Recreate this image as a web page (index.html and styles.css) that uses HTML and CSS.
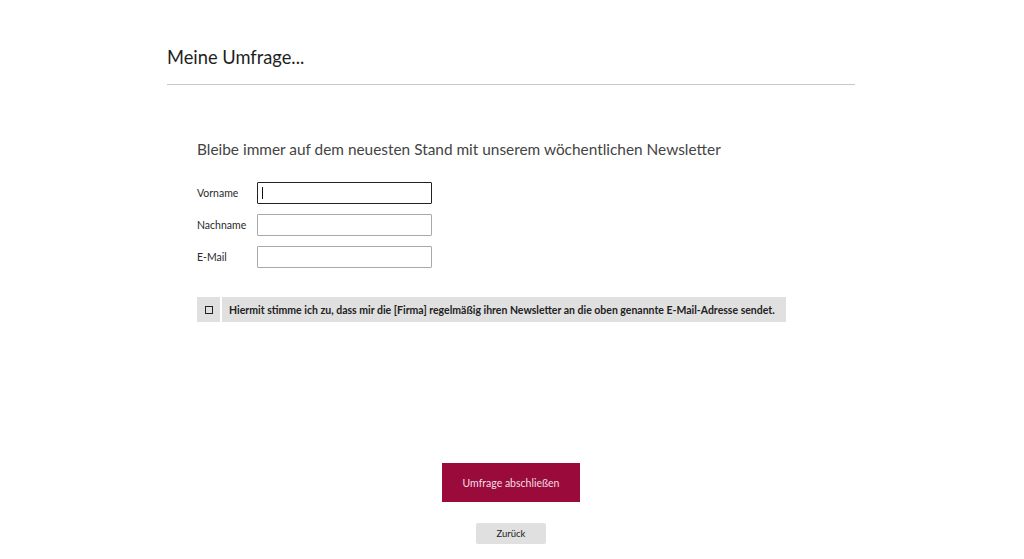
FILE: index.html
```html
<!DOCTYPE html>
<html lang="de">
<head>
<meta charset="utf-8">
<title>Meine Umfrage</title>
<link rel="stylesheet" href="styles.css">
</head>
<body>
<main class="page">
  <h1 class="title">Meine Umfrage...</h1>
  <hr class="rule">
  <section class="survey">
    <h2 class="lead">Bleibe immer auf dem neuesten Stand mit unserem wöchentlichen Newsletter</h2>
    <div class="fields">
      <label class="field"><span class="label">Vorname</span><span class="input focus"><span class="caret"></span></span></label>
      <label class="field"><span class="label">Nachname</span><span class="input"></span></label>
      <label class="field"><span class="label">E-Mail</span><span class="input"></span></label>
    </div>
    <div class="consent">
      <span class="box-cell"><span class="box"></span></span>
      <span class="consent-text">Hiermit stimme ich zu, dass mir die [Firma] regelmäßig ihren Newsletter an die oben genannte E-Mail-Adresse sendet.</span>
    </div>
  </section>
  <div class="actions">
    <button class="btn-primary">Umfrage abschließen</button>
    <button class="btn-back">Zurück</button>
  </div>
</main>
</body>
</html>
```

FILE: styles.css
```css
html, body {
  margin: 0;
  padding: 0;
  background: #ffffff;
}
body {
  font-family: Lato, "Open Sans", "Liberation Sans", sans-serif;
  color: #222;
}
.page {
  width: 688px;
  margin: 0 auto;
  padding-top: 45px;
  box-sizing: border-box;
  position: relative;
  left: -1px;
}
.title {
  margin: 0;
  font-size: 18.3px;
  line-height: 24px;
  font-weight: 400;
  color: #1e1e1e;
}
.rule {
  margin: 15px 0 0;
  border: 0;
  height: 1px;
  background: #c8c8c8;
}
.survey {
  padding-left: 30px;
}
.lead {
  margin: 54px 0 0;
  font-size: 15.4px;
  line-height: 20px;
  font-weight: 400;
  color: #444;
}
.fields {
  margin-top: 23px;
  display: flex;
  flex-direction: column;
  gap: 10px;
}
.field {
  display: flex;
  align-items: center;
  height: 22px;
}
.label {
  width: 60px;
  font-size: 10.5px;
  color: #2a2a2a;
}
.input {
  width: 169px;
  height: 20px;
  border: 1px solid #a9a9a9;
  border-radius: 1px;
  background: #fff;
  display: flex;
  align-items: center;
  padding-left: 4px;
  box-sizing: content-box;
}
.input.focus {
  border-color: #222;
}
.caret {
  width: 1px;
  height: 12px;
  background: #111;
}
.consent {
  margin-top: 29px;
  display: flex;
  gap: 2px;
  width: 589px;
  height: 25px;
}
.box-cell {
  width: 23px;
  background: #e0e0e0;
  display: flex;
  align-items: center;
  justify-content: center;
}
.box {
  width: 6px;
  height: 6px;
  border: 1px solid #222;
}
.consent-text {
  flex: 1;
  background: #e0e0e0;
  display: flex;
  align-items: center;
  padding-left: 7px;
  font-size: 10.5px;
  font-weight: 700;
  color: #222;
}
.actions {
  margin-top: 141px;
  display: flex;
  flex-direction: column;
  align-items: center;
  gap: 21px;
}
.btn-primary {
  width: 138px;
  height: 39px;
  border: 0;
  background: #9a0b3b;
  color: #f3dde4;
  font-family: inherit;
  font-size: 10.5px;
}
.btn-back {
  width: 70px;
  height: 21px;
  border: 0;
  border-radius: 2px;
  background: #e0e0e0;
  color: #222;
  font-family: inherit;
  font-size: 9.5px;
}
```
